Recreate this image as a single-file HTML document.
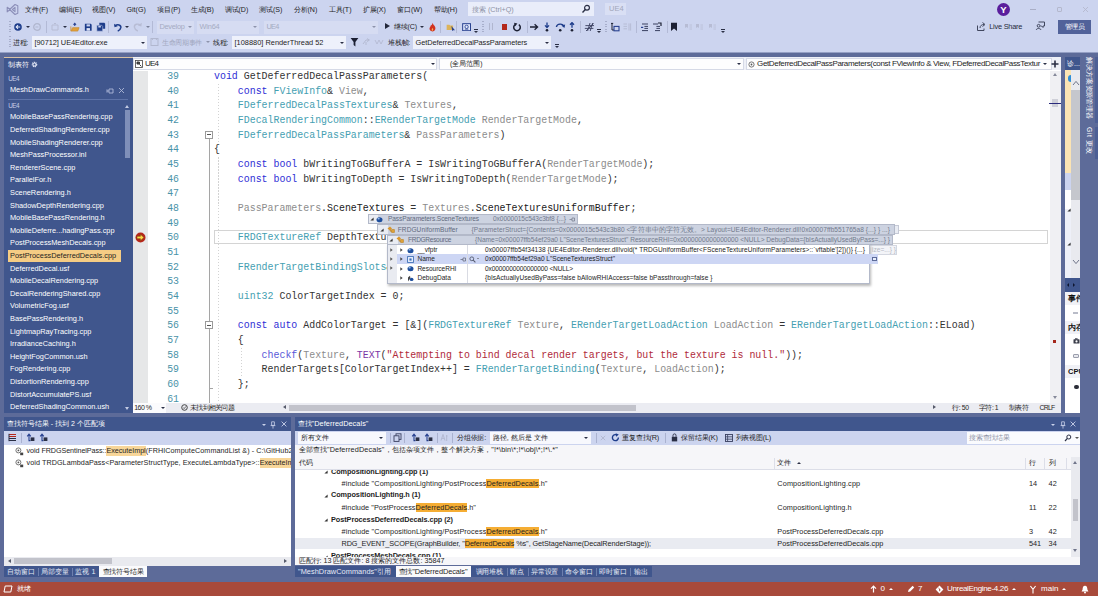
<!DOCTYPE html>
<html lang="zh">
<head>
<meta charset="utf-8">
<title>UE4 - Microsoft Visual Studio</title>
<style>
*{box-sizing:border-box;margin:0;padding:0}
html,body{width:1098px;height:596px;overflow:hidden}
body{position:relative;background:#5d6b99;font-family:"Liberation Sans",sans-serif;font-size:8px;color:#1e1e1e}
.a{position:absolute;white-space:nowrap}
.t{position:absolute;white-space:nowrap;line-height:10px;height:10px}
/* top */
#top{left:0;top:0;width:1098px;height:53.5px;background:linear-gradient(#ccd4ef 0,#ccd4ef 51.5px,#5d6b99 53.5px)}
.menu{top:4.5px;font-size:7.1px;color:#1e1e1e}
.gray{color:#8f96ab}
/* side panel */
#side{left:4px;top:58px;width:128.5px;height:355px;background:#40568d;overflow:hidden}
#side .it{position:absolute;left:6px;font-size:7.35px;color:#fff;line-height:10px;white-space:nowrap}
/* editor */
#ed{left:133px;top:57px;width:927.5px;height:356px;background:#fff;overflow:hidden}
.ln{position:absolute;left:26px;width:20px;text-align:right;font-family:"Liberation Mono",monospace;font-size:11.6px;line-height:14px;color:#4a93a8;transform:scaleX(.85);transform-origin:right center}
.cl{position:absolute;left:81px;font-family:"Liberation Mono",monospace;font-size:11.6px;line-height:14px;height:14px;white-space:pre;color:#333;transform:scaleX(.855);transform-origin:left center}
.k{color:#2f2fd6}.ty{color:#45a0b2}.p{color:#8c8c8c}.s{color:#b02a3a}.m{color:#5858d8}.m2{color:#7a35a5}.b{color:#1a1a1a}
</style>
</head>
<body>
<div id="top" class="a">
<svg class="a" style="left:6px;top:3px" width="13" height="13" viewBox="0 0 13 13"><path d="M1.2 4.2 L4.2 6.5 L1.2 8.8 Z M9 1.5 L11.8 2.8 L11.8 10.2 L9 11.5 L3.6 6.5 Z M9 4.3 L6.4 6.5 L9 8.7 Z" fill="none" stroke="#8c8fb9" stroke-width="1.1" stroke-linejoin="round"/></svg>
<div class="t menu" style="left:25px">文件(F)</div>
<div class="t menu" style="left:58.5px">编辑(E)</div>
<div class="t menu" style="left:92px">视图(V)</div>
<div class="t menu" style="left:126.5px">Git(G)</div>
<div class="t menu" style="left:157px">项目(P)</div>
<div class="t menu" style="left:190.5px">生成(B)</div>
<div class="t menu" style="left:224.5px">调试(D)</div>
<div class="t menu" style="left:259px">测试(S)</div>
<div class="t menu" style="left:293.5px">分析(N)</div>
<div class="t menu" style="left:328.5px">工具(T)</div>
<div class="t menu" style="left:362.5px">扩展(X)</div>
<div class="t menu" style="left:397px">窗口(W)</div>
<div class="t menu" style="left:433.5px">帮助(H)</div>
<div class="a" style="left:468px;top:2px;width:126px;height:14px;background:#e9edfa"></div>
<div class="t" style="letter-spacing:-0.005px;left:472px;top:4.5px;color:#8e93a6;font-size:7.2px">搜索 (Ctrl+Q)</div>
<svg class="a" style="left:581px;top:4px" width="10" height="10" viewBox="0 0 10 10"><circle cx="6" cy="3.8" r="2.4" fill="none" stroke="#2a2f45" stroke-width="1.2"/><path d="M4.3 5.6 L1.5 8.6" stroke="#2a2f45" stroke-width="1.4"/></svg>
<div class="a" style="left:605px;top:3px;width:21px;height:12px;background:#d9dff4"></div>
<div class="t" style="left:609px;top:4px;color:#a2a7bb;font-size:7.5px">UE4</div>
<div class="a" style="left:997px;top:3px;width:13px;height:13px;border-radius:50%;background:#5a1e9c"></div>
<div class="t" style="left:1000.2px;top:4.5px;color:#fff;font-size:9.5px;font-weight:bold">Y</div>
<div class="a" style="left:1030px;top:9px;width:6px;height:1px;background:#a9aec6"></div>
<div class="a" style="left:1057px;top:7px;width:5px;height:5px;border:1px solid #b4b8cd;border-radius:1px"></div>
<svg class="a" style="left:1082px;top:6px" width="7" height="7" viewBox="0 0 7 7"><path d="M1 1 L6 6 M6 1 L1 6" stroke="#b4b8cd" stroke-width="0.9"/></svg>
<svg class="a" style="left:976px;top:21px" width="11" height="11" viewBox="0 0 11 11"><path d="M1.5 4.5 L1.5 9.5 L8 9.5 L8 7.5 M4 7 C4 4.5 6 3.5 8 3.5 M6.5 1.5 L9 3.5 L6.5 5.5" fill="none" stroke="#41475f" stroke-width="1"/></svg>
<div class="t" style="letter-spacing:-0.234px;left:989.2px;top:22px;font-size:7.4px;color:#262b40">Live Share</div>
<svg class="a" style="left:1035px;top:20px" width="11" height="11" viewBox="0 0 11 11"><path d="M3.5 2 L9.5 2 L9.5 6 L8 6 L8 7.5 L6.5 6 L5.5 6" fill="none" stroke="#41475f" stroke-width="1"/><circle cx="3.6" cy="5.8" r="1.4" fill="none" stroke="#41475f" stroke-width="1"/><path d="M1.2 10 C1.5 8 5.5 8 6 10" fill="none" stroke="#41475f" stroke-width="1"/></svg>
<div class="a" style="left:1058px;top:20px;width:33px;height:14px;background:#51629a"></div>
<div class="t" style="letter-spacing:-0.600px;left:1065px;top:22px;font-size:6.6px;color:#fff">管理员</div>
<div class="a" style="left:9px;top:20.5px;width:2px;height:12px;background:repeating-linear-gradient(#a7aecb 0 1px,transparent 1px 2.5px)"></div>
<svg class="a" style="left:13.3px;top:22.1px" width="10" height="10" viewBox="0 0 10 10"><circle cx="5" cy="5" r="3.8" fill="#1d3c8a"/><path d="M7.2 5 L3.4 5 M5 3.2 L3.2 5 L5 6.8" stroke="#e4e9fa" stroke-width="1.1" fill="none"/></svg>
<div class="a" style="left:26px;top:25.5px;width:0;height:0;border-left:2px solid transparent;border-right:2px solid transparent;border-top:2.2px solid #2a2f45"></div>
<svg class="a" style="left:32px;top:21.5px" width="10" height="10" viewBox="0 0 10 10"><circle cx="5" cy="5" r="3.3" fill="none" stroke="#b1b7cf" stroke-width="1.3"/><path d="M3.4 5 L6.4 5" stroke="#b1b7cf" stroke-width="1"/></svg>
<div class="a" style="left:46px;top:20.5px;width:1px;height:12px;background:#b3bad6"></div>
<svg class="a" style="left:50px;top:21.5px" width="10" height="10" viewBox="0 0 10 10"><path d="M2 3 L8 3 L8 8 L2 8 Z M4 1.5 L6 1.5" fill="none" stroke="#b7bcd4" stroke-width="1"/></svg>
<div class="a" style="left:63px;top:25.5px;width:0;height:0;border-left:2px solid transparent;border-right:2px solid transparent;border-top:2.2px solid #2a2f45"></div>
<svg class="a" style="left:70px;top:22px" width="9.5" height="10.4" viewBox="0 0 11 12"><path d="M1 5 L1 10.5 L9 10.5 L10.5 6.5 L3 6.5 L1.8 10" fill="#e0a03c" stroke="#c98a2c" stroke-width=".8"/><path d="M5.5 4.5 L5.5 2 M4 3.2 L5.5 1.5 L7 3.2" stroke="#27408f" stroke-width="1.2" fill="none"/></svg>
<svg class="a" style="left:83.5px;top:22.7px" width="8.5" height="8.5" viewBox="0 0 10 10"><path d="M1 1 L8 1 L9 2 L9 9 L1 9 Z" fill="#1d3c8a"/><rect x="3" y="1.6" width="4" height="2.4" fill="#ccd4ef"/><rect x="3" y="6" width="4" height="3" fill="#dfe4f6"/></svg>
<svg class="a" style="left:95.5px;top:22px" width="10" height="10" viewBox="0 0 12 12"><path d="M4 1 L10 1 L11 2 L11 8 L4 8 Z" fill="#1d3c8a"/><path d="M1 4 L7 4 L8 5 L8 11 L1 11 Z" fill="#1d3c8a" stroke="#ccd4ef" stroke-width=".6"/><rect x="2.8" y="4.6" width="3" height="2" fill="#ccd4ef"/></svg>
<div class="a" style="left:108px;top:20.5px;width:1px;height:12px;background:#b3bad6"></div>
<svg class="a" style="left:112.5px;top:21.5px" width="10" height="11" viewBox="0 0 11 12"><path d="M2.2 4.2 C5 2.2 9 3 8.6 6.2 C8.3 8 7 9.3 5.2 10" fill="none" stroke="#1d3c8a" stroke-width="1.7"/><path d="M1.2 1.8 L1.6 5.6 L5.2 4.6 Z" fill="#1d3c8a"/></svg>
<div class="a" style="left:125px;top:25.5px;width:0;height:0;border-left:2px solid transparent;border-right:2px solid transparent;border-top:2.2px solid #2a2f45"></div>
<svg class="a" style="left:132px;top:20.5px" width="11" height="12" viewBox="0 0 11 12"><path d="M8.8 4.2 C6 2.2 2 3 2.4 6.2 C2.7 8 4 9.3 5.8 10" fill="none" stroke="#b7bcd4" stroke-width="1.4"/><path d="M9.8 1.8 L9.4 5.6 L5.8 4.6 Z" fill="#b7bcd4"/></svg>
<div class="a" style="left:146px;top:25.5px;width:0;height:0;border-left:2px solid transparent;border-right:2px solid transparent;border-top:2.2px solid #7b819a"></div>
<div class="a" style="left:152px;top:20.5px;width:1px;height:12px;background:#b3bad6"></div>
<div class="a" style="left:157px;top:20.5px;width:37px;height:13px;background:#d6dcf2"></div><div class="t" style="letter-spacing:-0.304px;left:159.5px;top:22px;color:#a5abc2;font-size:7.4px">Develop</div><div class="a" style="left:187.5px;top:26px;width:0;height:0;border-left:2px solid transparent;border-right:2px solid transparent;border-top:2.2px solid #8d93ab"></div>
<div class="a" style="left:197px;top:20.5px;width:62px;height:13px;background:#d6dcf2"></div><div class="t" style="letter-spacing:-0.191px;left:199.5px;top:22px;color:#a5abc2;font-size:7.4px">Win64</div><div class="a" style="left:252.5px;top:26px;width:0;height:0;border-left:2px solid transparent;border-right:2px solid transparent;border-top:2.2px solid #8d93ab"></div>
<div class="a" style="left:264px;top:20.5px;width:114px;height:13px;background:#d6dcf2"></div><div class="t" style="letter-spacing:-0.797px;left:266.5px;top:22px;color:#a5abc2;font-size:7.4px">UE4</div><div class="a" style="left:371.5px;top:26px;width:0;height:0;border-left:2px solid transparent;border-right:2px solid transparent;border-top:2.2px solid #8d93ab"></div>
<div class="a" style="left:385px;top:22.9px;width:0;height:0;border-top:3.6px solid transparent;border-bottom:3.6px solid transparent;border-left:5px solid #22273a"></div>
<div class="t" style="letter-spacing:-0.112px;left:393.7px;top:22px;color:#1e1e1e;font-size:7.1px">继续(C)</div>
<div class="a" style="left:420px;top:25.5px;width:0;height:0;border-left:2px solid transparent;border-right:2px solid transparent;border-top:2.2px solid #2a2f45"></div>
<svg class="a" style="left:428px;top:21.5px" width="9" height="10" viewBox="0 0 9 10"><path d="M4.5 .8 C5 3 7.8 4 7.4 6.8 C7.1 8.6 5.8 9.4 4.4 9.4 C2.6 9.4 1.4 8.2 1.5 6.6 C1.6 5 2.8 4.6 2.8 3.2 C3.8 3.6 4.2 2.4 4.5 .8 Z" fill="#d2341f"/><path d="M4.5 6 C5.4 7 5.4 8.6 4.4 8.8 C3.4 8.6 3.6 7 4.5 6Z" fill="#f7b25a"/></svg>
<div class="a" style="left:440px;top:20.5px;width:1px;height:12px;background:#b3bad6"></div>
<svg class="a" style="left:445.5px;top:22.5px" width="10" height="8.4" viewBox="0 0 12 10"><path d="M.8 2 L4 2 L5 3 L8.5 3 L8.5 8.4 L.8 8.4 Z" fill="#dcb35a"/><path d="M6.4 3.6 L10.8 8.8 L8.6 8.6 L7.6 9.8 Z" fill="#27408f"/></svg>
<div class="a" style="left:456px;top:20.5px;width:1px;height:12px;background:#b3bad6"></div>
<svg class="a" style="left:462.3px;top:22.5px" width="9.2" height="8.4" viewBox="0 0 11 10"><rect x=".8" y=".8" width="9.4" height="8.4" fill="#dfe6fb" stroke="#27408f" stroke-width="1.2"/><circle cx="5.5" cy="4.6" r="2" fill="none" stroke="#27408f" stroke-width="1"/><path d="M3.4 7.4 L7.6 7.4" stroke="#27408f" stroke-width=".9"/></svg>
<div class="a" style="left:474px;top:28.5px;width:4px;height:1px;background:#2a2f45"></div><div class="a" style="left:474px;top:30.5px;width:0;height:0;border-left:2px solid transparent;border-right:2px solid transparent;border-top:2.2px solid #2a2f45"></div>
<div class="a" style="left:482px;top:20.5px;width:2px;height:12px;background:repeating-linear-gradient(#a7aecb 0 1px,transparent 1px 2.5px)"></div>
<div class="a" style="left:489px;top:23px;width:1.2px;height:7px;background:#b0b6cf"></div><div class="a" style="left:492px;top:23px;width:1.2px;height:7px;background:#b0b6cf"></div>
<div class="a" style="left:501.5px;top:24px;width:5.5px;height:5.5px;background:#b3271a"></div>
<svg class="a" style="left:512px;top:21.5px" width="10" height="10" viewBox="0 0 10 10"><path d="M3.2 2.6 A3.3 3.3 0 1 0 6.8 2.6" fill="none" stroke="#1c2033" stroke-width="1.5"/><path d="M2 .8 L5.4 1.4 L3.2 4.2 Z" fill="#1c2033"/></svg>
<div class="a" style="left:527px;top:20.5px;width:1px;height:12px;background:#b3bad6"></div>
<svg class="a" style="left:529px;top:21.5px" width="10" height="10" viewBox="0 0 10 10"><path d="M1 5 L8.4 5 M5.6 2.2 L8.6 5 L5.6 7.8" fill="none" stroke="#1c2033" stroke-width="1.3"/></svg>
<svg class="a" style="left:543px;top:21.5px" width="8" height="10" viewBox="0 0 8 10"><path d="M4 .6 L4 5.2 M2 3.4 L4 5.6 L6 3.4" fill="none" stroke="#1d3c8a" stroke-width="1.3"/><circle cx="4" cy="8.2" r="1.3" fill="#1c2033"/></svg>
<svg class="a" style="left:555.3px;top:21.5px" width="11" height="10" viewBox="0 0 11 10"><path d="M1.4 5 C2 1.4 8 1.2 8.8 4.6" fill="none" stroke="#1d3c8a" stroke-width="1.4"/><path d="M6.4 3.6 L9.4 6 L10.2 2.4 Z" fill="#1d3c8a"/><circle cx="5.2" cy="8.2" r="1.3" fill="#1c2033"/></svg>
<svg class="a" style="left:568px;top:21.5px" width="8" height="10" viewBox="0 0 8 10"><path d="M4 5.8 L4 1 M2 2.8 L4 .6 L6 2.8" fill="none" stroke="#1d3c8a" stroke-width="1.3"/><circle cx="4" cy="8.2" r="1.3" fill="#1c2033"/></svg>
<div class="a" style="left:580px;top:20.5px;width:1px;height:12px;background:#b3bad6"></div>
<svg class="a" style="left:584px;top:21.5px" width="11" height="10" viewBox="0 0 11 10"><path d="M3.6 9 L6 1 M6.2 9 L8.6 1 M1.4 3.6 L10 3.6 M.8 6.4 L9.4 6.4 M2 9 L9.6 1.4" stroke="#3a4060" stroke-width=".9" fill="none"/></svg>
<div class="a" style="left:597px;top:28.5px;width:4px;height:1px;background:#2a2f45"></div><div class="a" style="left:597px;top:30.5px;width:0;height:0;border-left:2px solid transparent;border-right:2px solid transparent;border-top:2.2px solid #2a2f45"></div>
<div class="a" style="left:605px;top:20.5px;width:2px;height:12px;background:repeating-linear-gradient(#a7aecb 0 1px,transparent 1px 2.5px)"></div>
<svg class="a" style="left:610px;top:21.5px" width="10" height="10" viewBox="0 0 10 10"><path d="M1 1.4 L3.2 1.4 M2 1.4 L2 8 L4 8" stroke="#1c2033" stroke-width="1" fill="none"/><rect x="4" y="4.4" width="5" height="4.4" fill="none" stroke="#27408f" stroke-width="1.1"/></svg>
<svg class="a" style="left:622px;top:21.5px" width="10" height="10" viewBox="0 0 10 10"><path d="M1.5 2 L5 2 M1.5 4.4 L5 4.4 M1.5 6.8 L5 6.8 M7 1.4 L7 8.6 M8.6 1.4 L8.6 8.6" stroke="#b4bad2" stroke-width=".9"/></svg>
<div class="a" style="left:636px;top:20.5px;width:1px;height:12px;background:#b3bad6"></div>
<svg class="a" style="left:640px;top:21.5px" width="10" height="10" viewBox="0 0 10 10"><path d="M2 2 L8 2 M4.4 4.4 L8 4.4 M4.4 6.4 L8 6.4 M2 8.6 L8 8.6" stroke="#3a4060" stroke-width="1"/><path d="M1 5.4 L3.2 5.4" stroke="#27408f" stroke-width="1.2"/></svg>
<svg class="a" style="left:652px;top:21.5px" width="10" height="10" viewBox="0 0 10 10"><path d="M1 2 L6 2 M4.4 4.4 L8 4.4 M4.4 6.4 L8 6.4 M3 8.6 L8 8.6" stroke="#3a4060" stroke-width="1"/><path d="M6 1 L9 1 L9 4" stroke="#1c2033" stroke-width="1.2" fill="none"/></svg>
<div class="a" style="left:667px;top:20.5px;width:1px;height:12px;background:#b3bad6"></div>
<svg class="a" style="left:670px;top:21.5px" width="8" height="10" viewBox="0 0 8 10"><path d="M1 .8 L7 .8 L7 9 L4 6.6 L1 9 Z" fill="#1c2033"/></svg>
<svg class="a" style="left:684px;top:22.5px" width="9" height="8" viewBox="0 0 9 8"><path d="M1 1 L4 1 L4 5 L2.5 4 L1 5 Z" fill="#b7bcd4"/><path d="M5.4 2 L8 2 M5.4 4 L8 4 M5.4 6 L8 6" stroke="#b7bcd4" stroke-width=".8"/></svg>
<svg class="a" style="left:695px;top:22.5px" width="9" height="8" viewBox="0 0 9 8"><path d="M1 1 L4 1 L4 5 L2.5 4 L1 5 Z" fill="#b7bcd4"/><path d="M5.4 2 L8 2 M5.4 4 L8 4 M5.4 6 L8 6" stroke="#b7bcd4" stroke-width=".8"/></svg>
<svg class="a" style="left:708px;top:22.5px" width="9" height="8" viewBox="0 0 9 8"><path d="M1 1 L4 1 L4 5 L2.5 4 L1 5 Z" fill="#b7bcd4"/><path d="M5.4 2 L8 2 M5.4 4 L8 4 M5.4 6 L8 6" stroke="#b7bcd4" stroke-width=".8"/></svg>
<div class="a" style="left:720.5px;top:28.5px;width:4px;height:1px;background:#2a2f45"></div><div class="a" style="left:720.5px;top:30.5px;width:0;height:0;border-left:2px solid transparent;border-right:2px solid transparent;border-top:2.2px solid #2a2f45"></div>
<div class="a" style="left:9px;top:36px;width:2px;height:12px;background:repeating-linear-gradient(#a7aecb 0 1px,transparent 1px 2.5px)"></div>
<div class="t" style="letter-spacing:-0.318px;left:13px;top:37.5px;font-size:7px">进程:</div>
<div class="a" style="left:32px;top:36px;width:115px;height:13px;background:#eef1fb"></div><div class="t" style="letter-spacing:-0.046px;left:34.5px;top:37.5px;color:#1e1e1e;font-size:7.4px">[90712] UE4Editor.exe</div><div class="a" style="left:140.5px;top:41.5px;width:0;height:0;border-left:2px solid transparent;border-right:2px solid transparent;border-top:2.2px solid #2a2f45"></div>
<svg class="a" style="left:150px;top:37px" width="9" height="10" viewBox="0 0 9 10"><rect x="1" y="1.5" width="7" height="7" fill="none" stroke="#b1b7cf" stroke-width="1"/><path d="M2.4 1 L2.4 3 M6.4 1 L6.4 3" stroke="#b1b7cf"/></svg>
<div class="t" style="letter-spacing:-0.333px;left:162px;top:37.5px;color:#a1a7be;font-size:6.9px">生命周期事件</div>
<div class="a" style="left:206px;top:41px;width:0;height:0;border-left:2px solid transparent;border-right:2px solid transparent;border-top:2.2px solid #8d93ab"></div>
<div class="t" style="letter-spacing:-0.318px;left:213px;top:37.5px;font-size:7px">线程:</div>
<div class="a" style="left:232px;top:36px;width:114px;height:13px;background:#eef1fb"></div><div class="t" style="letter-spacing:0.010px;left:234.5px;top:37.5px;color:#1e1e1e;font-size:7.4px">[108880] RenderThread 52</div><div class="a" style="left:339.5px;top:41.5px;width:0;height:0;border-left:2px solid transparent;border-right:2px solid transparent;border-top:2.2px solid #2a2f45"></div>
<svg class="a" style="left:350px;top:37px" width="9" height="10" viewBox="0 0 9 10"><path d="M.6 1 L8.4 1 L5.4 5 L5.4 9.4 L3.6 8 L3.6 5 Z" fill="#1c2033"/></svg>
<svg class="a" style="left:362px;top:38px" width="9" height="8" viewBox="0 0 9 8"><path d="M1 6 L4 2 L7 2 M5 .6 L7.4 2 L5 3.6 M4 7 L4 4" stroke="#b4bad2" stroke-width="1" fill="none"/></svg>
<svg class="a" style="left:374px;top:38px" width="10" height="8" viewBox="0 0 10 8"><path d="M1 2 L3 6 L5 2 L7 6 L9 2" stroke="#b4bad2" stroke-width=".9" fill="none"/></svg>
<div class="t" style="letter-spacing:-0.238px;left:388px;top:37.5px;font-size:7px">堆栈帧:</div>
<div class="a" style="left:413px;top:36px;width:138px;height:13px;background:#eef1fb"></div><div class="t" style="letter-spacing:-0.083px;left:415.5px;top:37.5px;color:#1e1e1e;font-size:7.4px">GetDeferredDecalPassParameters</div><div class="a" style="left:544.5px;top:41.5px;width:0;height:0;border-left:2px solid transparent;border-right:2px solid transparent;border-top:2.2px solid #2a2f45"></div>
<div class="a" style="left:555px;top:44px;width:4px;height:1px;background:#2a2f45"></div><div class="a" style="left:555px;top:46px;width:0;height:0;border-left:2px solid transparent;border-right:2px solid transparent;border-top:2.2px solid #2a2f45"></div>
</div>
<div id="side" class="a"><div class="a" style="left:0;top:-1px">
<div class="t" style="letter-spacing:-0.333px;left:4.3px;top:2.7px;color:#fff;font-size:6.7px">制表符</div>
<svg class="a" style="left:27.2px;top:3.7px" width="7" height="7" viewBox="0 0 7 7"><circle cx="3.5" cy="3.5" r="2" fill="none" stroke="#dfe4f4" stroke-width="1.6" stroke-dasharray="1.05 .52"/><circle cx="3.5" cy="3.5" r="1.4" fill="none" stroke="#dfe4f4" stroke-width=".9"/></svg>
<div class="t" style="letter-spacing:-0.546px;left:4.3px;top:16.8px;color:#c5cde6;font-size:6.4px">UE4</div>
<div class="it" style="top:28px">MeshDrawCommands.h</div>
<svg class="a" style="left:102px;top:30px" width="8" height="7" viewBox="0 0 8 7"><path d="M1 5.6 L1 2.4 M1 4 L3 4 M3 2 L3 6 L7 6 L7 2 Z" fill="none" stroke="#aeb8d8" stroke-width=".9"/></svg>
<svg class="a" style="left:114px;top:30px" width="7" height="7" viewBox="0 0 7 7"><path d="M1 1 L6 6 M6 1 L1 6" stroke="#aeb8d8" stroke-width=".9"/></svg>
<div class="a" style="left:4px;top:41.5px;width:120px;height:1px;background:#5e73a8"></div>
<div class="t" style="letter-spacing:-0.546px;left:4.3px;top:44.3px;color:#c5cde6;font-size:6.4px">UE4</div>
<div class="it" style="top:55.2px">MobileBasePassRendering.cpp</div>
<div class="it" style="top:67.9px">DeferredShadingRenderer.cpp</div>
<div class="it" style="top:80.5px">MobileShadingRenderer.cpp</div>
<div class="it" style="top:93.1px">MeshPassProcessor.inl</div>
<div class="it" style="top:105.7px">RendererScene.cpp</div>
<div class="it" style="top:118.3px">ParallelFor.h</div>
<div class="it" style="top:130.9px">SceneRendering.h</div>
<div class="it" style="top:143.5px">ShadowDepthRendering.cpp</div>
<div class="it" style="top:156.1px">MobileBasePassRendering.h</div>
<div class="it" style="top:168.7px">MobileDeferre...hadingPass.cpp</div>
<div class="it" style="top:181.3px">PostProcessMeshDecals.cpp</div>
<div class="a" style="left:4px;top:192.7px;width:113px;height:12.3px;background:#f5cc84"></div>
<div class="it" style="top:194.0px;color:#1e1e1e">PostProcessDeferredDecals.cpp</div>
<div class="it" style="top:206.6px">DeferredDecal.usf</div>
<div class="it" style="top:219.2px">MobileDecalRendering.cpp</div>
<div class="it" style="top:231.8px">DecalRenderingShared.cpp</div>
<div class="it" style="top:244.4px">VolumetricFog.usf</div>
<div class="it" style="top:257.0px">BasePassRendering.h</div>
<div class="it" style="top:269.6px">LightmapRayTracing.cpp</div>
<div class="it" style="top:282.2px">IrradianceCaching.h</div>
<div class="it" style="top:294.8px">HeightFogCommon.ush</div>
<div class="it" style="top:307.4px">FogRendering.cpp</div>
<div class="it" style="top:320.1px">DistortionRendering.cpp</div>
<div class="it" style="top:332.7px">DistortAccumulatePS.usf</div>
<div class="it" style="top:345.3px">DeferredShadingCommon.ush</div>
<div class="a" style="left:121px;top:53.4px;width:5px;height:48px;background:#7f8fb9"></div>
<div class="a" style="left:121px;top:47.5px;width:0;height:0;border-left:2.5px solid transparent;border-right:2.5px solid transparent;border-bottom:3px solid #c3cbe4"></div>
<div class="a" style="left:121px;top:349.5px;width:0;height:0;border-left:2.5px solid transparent;border-right:2.5px solid transparent;border-top:3px solid #c3cbe4"></div>
</div></div>
<div class="a" style="left:4px;top:56.6px;width:1057px;height:1px;background:#d9c3a5"></div>
<div id="ed" class="a">
<div class="a" style="left:0;top:0;width:930px;height:.4px;background:#5d6b99"></div><div class="a" style="left:0;top:.4px;width:930px;height:13.1px;background:#eef0f7"></div>
<div class="a" style="left:0;top:1px;width:304px;height:12px;background:#fdfdfe;border:1px solid #d5d9e6"></div>
<div class="a" style="left:306px;top:1px;width:305px;height:12px;background:#fdfdfe;border:1px solid #d5d9e6"></div>
<div class="a" style="left:613px;top:1px;width:306px;height:12px;background:#fdfdfe;border:1px solid #d5d9e6"></div>
<svg class="a" style="left:2px;top:3px" width="8" height="8" viewBox="0 0 8 8"><rect x=".5" y=".5" width="7" height="7" fill="#fff" stroke="#444" stroke-width=".8"/><path d="M2 2 L4.4 2 L4.4 4 L2 4 Z M4.4 4.4 L6.4 6.4" stroke="#222" stroke-width=".9" fill="#666"/></svg>
<div class="t" style="letter-spacing:-0.854px;left:12px;top:2px;font-size:8px;color:#1e1e1e">UE4</div>
<div class="a" style="left:298px;top:6px;width:0;height:0;border-left:2px solid transparent;border-right:2px solid transparent;border-top:2.2px solid #2a2f45"></div>
<div class="t" style="left:317px;top:2px;font-size:6.8px;color:#1e1e1e">(全局范围)</div>
<div class="a" style="left:604px;top:6px;width:0;height:0;border-left:2px solid transparent;border-right:2px solid transparent;border-top:2.2px solid #2a2f45"></div>
<svg class="a" style="left:614.5px;top:3.5px" width="7" height="7" viewBox="0 0 7 7"><circle cx="3.5" cy="3.5" r="2.6" fill="none" stroke="#555" stroke-width=".8"/><circle cx="3.5" cy="3.5" r=".9" fill="#555"/></svg>
<div class="t" style="letter-spacing:-0.343px;left:624px;top:2px;font-size:8px;color:#1e1e1e">GetDeferredDecalPassParameters(const FViewInfo &amp; View, FDeferredDecalPassTextur</div>
<div class="a" style="left:910px;top:6px;width:0;height:0;border-left:2px solid transparent;border-right:2px solid transparent;border-top:2.2px solid #2a2f45"></div>
<svg class="a" style="left:918px;top:3px" width="8" height="8" viewBox="0 0 8 8"><path d="M4 .5 L4 7.5 M.5 4 L7.5 4" stroke="#2a2f45" stroke-width="1.6"/></svg>
<div class="a" style="left:0;top:13.5px;width:14.5px;height:332px;background:#e6e7e8"></div>
<div class="a" style="left:80.5px;top:173.0px;width:834.5px;height:14.3px;border:1px solid #d4d4d4"></div>
<div class="a" style="left:75.5px;top:80.7px;width:1px;height:266.0px;background:#a5a5a5"></div>
<div class="a" style="left:72px;top:73.7px;width:8px;height:8px;background:#fff;border:1px solid #9a9a9a"></div><div class="a" style="left:74px;top:77.2px;width:4px;height:1px;background:#555"></div>
<div class="a" style="left:72px;top:264.3px;width:8px;height:8px;background:#fff;border:1px solid #9a9a9a"></div><div class="a" style="left:74px;top:267.8px;width:4px;height:1px;background:#555"></div>
<div class="a" style="left:75.5px;top:331.0px;width:4px;height:1px;background:#a5a5a5"></div>
<div class="a" style="left:84.5px;top:26.7px;width:1px;height:58.7px;background:repeating-linear-gradient(#c8c8c8 0 1.5px,transparent 1.5px 3px);opacity:.8"></div>
<div class="a" style="left:84.5px;top:100.0px;width:1px;height:249.3px;background:repeating-linear-gradient(#c8c8c8 0 1.5px,transparent 1.5px 3px);opacity:.8"></div>
<div class="a" style="left:108.3px;top:290.6px;width:1px;height:29.3px;background:repeating-linear-gradient(#c8c8c8 0 1.5px,transparent 1.5px 3px);opacity:.8"></div>
<div class="ln" style="top:12.0px">39</div>
<div class="cl" style="top:12.0px"><span class="k">void</span> GetDeferredDecalPassParameters(</div>
<div class="ln" style="top:26.7px">40</div>
<div class="cl" style="top:26.7px">    <span class="k">const</span> <span class="ty">FViewInfo</span>&amp; <span class="p">View</span>,</div>
<div class="ln" style="top:41.3px">41</div>
<div class="cl" style="top:41.3px">    <span class="ty">FDeferredDecalPassTextures</span>&amp; <span class="p">Textures</span>,</div>
<div class="ln" style="top:56.0px">42</div>
<div class="cl" style="top:56.0px">    <span class="ty">FDecalRenderingCommon</span>::<span class="ty">ERenderTargetMode</span> <span class="p">RenderTargetMode</span>,</div>
<div class="ln" style="top:70.7px">43</div>
<div class="cl" style="top:70.7px">    <span class="ty">FDeferredDecalPassParameters</span>&amp; <span class="p">PassParameters</span>)</div>
<div class="ln" style="top:85.3px">44</div>
<div class="cl" style="top:85.3px">{</div>
<div class="ln" style="top:100.0px">45</div>
<div class="cl" style="top:100.0px">    <span class="k">const</span> <span class="k">bool</span> bWritingToGBufferA = IsWritingToGBufferA(<span class="p">RenderTargetMode</span>);</div>
<div class="ln" style="top:114.7px">46</div>
<div class="cl" style="top:114.7px">    <span class="k">const</span> <span class="k">bool</span> bWritingToDepth = IsWritingToDepth(<span class="p">RenderTargetMode</span>);</div>
<div class="ln" style="top:129.3px">47</div>
<div class="ln" style="top:144.0px">48</div>
<div class="cl" style="top:144.0px">    <span class="p">PassParameters</span>.<span class="b">SceneTextures</span> = <span class="p">Textures</span>.<span class="b">SceneTexturesUniformBuffer</span>;</div>
<div class="ln" style="top:158.6px">49</div>
<div class="ln" style="top:173.3px">50</div>
<div class="cl" style="top:173.3px">    <span class="ty">FRDGTextureRef</span> DepthTexture = <span class="p">Textures</span>.Depth.Target;</div>
<div class="ln" style="top:188.0px">51</div>
<div class="ln" style="top:202.6px">52</div>
<div class="cl" style="top:202.6px">    <span class="ty">FRenderTargetBindingSlots</span>&amp; RenderTargets = <span class="p">PassParameters</span>.RenderTargets;</div>
<div class="ln" style="top:217.3px">53</div>
<div class="ln" style="top:232.0px">54</div>
<div class="cl" style="top:232.0px">    <span class="ty">uint32</span> ColorTargetIndex = 0;</div>
<div class="ln" style="top:246.6px">55</div>
<div class="ln" style="top:261.3px">56</div>
<div class="cl" style="top:261.3px">    <span class="k">const</span> <span class="k">auto</span> AddColorTarget = [&amp;](<span class="ty">FRDGTextureRef</span> <span class="p">Texture</span>, <span class="ty">ERenderTargetLoadAction</span> <span class="p">LoadAction</span> = <span class="ty">ERenderTargetLoadAction</span>::ELoad)</div>
<div class="ln" style="top:276.0px">57</div>
<div class="cl" style="top:276.0px">    {</div>
<div class="ln" style="top:290.6px">58</div>
<div class="cl" style="top:290.6px">        <span class="m">checkf</span>(<span class="p">Texture</span>, <span class="m2">TEXT</span>(<span class="s">"Attempting to bind decal render targets, but the texture is null."</span>));</div>
<div class="ln" style="top:305.3px">59</div>
<div class="cl" style="top:305.3px">        RenderTargets[ColorTargetIndex++] = <span class="ty">FRenderTargetBinding</span>(<span class="p">Texture</span>, <span class="p">LoadAction</span>);</div>
<div class="ln" style="top:320.0px">60</div>
<div class="cl" style="top:320.0px">    };</div>
<div class="ln" style="top:334.6px">61</div>
<svg class="a" style="left:1.5px;top:174.8px" width="11" height="11" viewBox="0 0 11 11"><circle cx="5.5" cy="5.5" r="5" fill="#b5271b"/><path d="M2 4.3 L5.4 4.3 L5.4 2.3 L9 5.5 L5.4 8.7 L5.4 6.7 L2 6.7 Z" fill="#ffd94a" stroke="#6b3b00" stroke-width=".5"/></svg>
<div class="a" style="left:916.5px;top:13.5px;width:11px;height:332px;background:#f0f0f3"></div>
<div class="a" style="left:919.5px;top:16px;width:0;height:0;border-left:2.5px solid transparent;border-right:2.5px solid transparent;border-bottom:3px solid #868999"></div>
<div class="a" style="left:919.5px;top:339.3px;width:0;height:0;border-left:2.5px solid transparent;border-right:2.5px solid transparent;border-top:3px solid #868999"></div>
<div class="a" style="left:918.7px;top:42px;width:6.3px;height:8px;background:#cfd0d8"></div>
<div class="a" style="left:916px;top:45.7px;width:11.5px;height:1.6px;background:#2a2b7c"></div>
<div class="a" style="left:920px;top:283px;width:2.5px;height:2.5px;background:#a5271b"></div>
<div class="a" style="left:0;top:345.5px;width:930px;height:10.5px;background:#ebecf2"></div>
<div class="a" style="left:0;top:346px;width:33px;height:10px;background:#fbfbfd"></div>
<div class="t" style="letter-spacing:-0.572px;left:1.3px;top:345.8px;font-size:7px;color:#1e1e1e">160 %</div>
<div class="a" style="left:28.4px;top:350px;width:0;height:0;border-left:2px solid transparent;border-right:2px solid transparent;border-top:2.2px solid #2a2f45"></div>
<svg class="a" style="left:47.5px;top:347.3px" width="7" height="7" viewBox="0 0 7 7"><circle cx="3.5" cy="3.5" r="2.8" fill="none" stroke="#444" stroke-width="1"/><path d="M2.2 3.5 L3.2 4.6 L5 2.4" stroke="#444" stroke-width=".8" fill="none"/></svg>
<div class="t" style="letter-spacing:-0.729px;left:57px;top:345.8px;font-size:6.9px;color:#1e1e1e">未找到相关问题</div>
<div class="a" style="left:150px;top:348.3px;width:0;height:0;border-top:2.5px solid transparent;border-bottom:2.5px solid transparent;border-right:3px solid #555a6a"></div>
<div class="a" style="left:156.2px;top:348.2px;width:346.7px;height:5.4px;background:#c2c3cb"></div>
<div class="a" style="left:799.5px;top:348.3px;width:0;height:0;border-top:2.5px solid transparent;border-bottom:2.5px solid transparent;border-left:3px solid #555a6a"></div>
<div class="t" style="letter-spacing:-0.309px;left:819px;top:345.8px;font-size:6.8px;color:#1e1e1e">行: 50</div>
<div class="t" style="letter-spacing:-0.512px;left:846px;top:345.8px;font-size:6.8px;color:#1e1e1e">字符: 1</div>
<div class="t" style="letter-spacing:-0.667px;left:876px;top:345.8px;font-size:6.8px;color:#1e1e1e">制表符</div>
<div class="t" style="letter-spacing:-0.763px;left:906.6px;top:345.8px;font-size:6.8px;color:#1e1e1e">CRLF</div>
</div>
<div id="tips" class="a" style="left:0;top:0">
<div class="a" style="left:367.5px;top:214px;width:210.5px;height:10.3px;background:linear-gradient(90deg,#e9ecf3 0 9.5px,#cdd3e1 9.5px);border:1px solid #b3b9c9"></div>
<svg class="a" style="left:370px;top:217.3px" width="4" height="4" viewBox="0 0 4 4"><path d="M3.6 .4 L3.6 3.6 L.4 3.6 Z" fill="#333"/></svg>
<svg class="a" style="left:376.0px;top:215.8px" width="7" height="7" viewBox="0 0 7 7"><ellipse cx="3.5" cy="3.7" rx="3" ry="2.5" fill="#1e4e9c"/><ellipse cx="2.6" cy="2.8" rx="1.2" ry=".8" fill="#9cc0f0"/></svg>
<div class="t" style="letter-spacing:-0.090px;left:388px;top:214.3px;font-size:6.55px;color:#626a7d">PassParameters.SceneTextures</div>
<div class="t" style="letter-spacing:-0.053px;left:493px;top:214.3px;font-size:6.55px;color:#727a8c">0x0000015c543c3bf8 {...}</div>
<svg class="a" style="left:569px;top:217px" width="6" height="5" viewBox="0 0 6 5"><path d="M.5 2.5 L3 2.5 M3 1 L3 4 L5.5 4 L5.5 1 Z" fill="none" stroke="#7a8090" stroke-width=".8"/></svg>
<div class="a" style="left:894px;top:225px;width:4.5px;height:9px;background:#e9ecf3;border:1px solid #c5c9d6;border-left:none"></div>
<div class="a" style="left:377px;top:224.4px;width:517.5px;height:10.3px;background:linear-gradient(90deg,#e9ecf3 0 9.6px,#cdd3e1 9.6px);border:1px solid #b3b9c9"></div>
<svg class="a" style="left:379.5px;top:227.6px" width="4" height="4" viewBox="0 0 4 4"><path d="M3.6 .4 L3.6 3.6 L.4 3.6 Z" fill="#333"/></svg>
<svg class="a" style="left:387px;top:226.1px" width="8" height="7" viewBox="0 0 8 7"><path d="M.5 2.5 L3 .5 L5 2.5 L3 4.5 Z" fill="#d9962a"/><path d="M4.6 3.6 L7.4 3.6 L7.4 6.4 L4.6 6.4 Z M3.2 3.6 L3.2 5.2 L4.6 5.2" fill="#e5a83c" stroke="#b77a18" stroke-width=".6"/></svg>
<div class="t" style="letter-spacing:0.069px;left:397.8px;top:224.6px;font-size:6.55px;color:#626a7d">FRDGUniformBuffer</div>
<div class="t" style="letter-spacing:0.064px;left:471.5px;top:224.6px;font-size:6.55px;color:#727a8c">{ParameterStruct={Contents=0x0000015c543c3b80 &lt;字符串中的字符无效。&gt; Layout=UE4Editor-Renderer.dll!0x00007ffb551765a8 {...} } ...}</div>
<div class="a" style="left:386.8px;top:234.6px;width:506.7px;height:10px;background:linear-gradient(90deg,#e9ecf3 0 9.6px,#cdd3e1 9.6px);border:1px solid #b3b9c9"></div>
<svg class="a" style="left:388.8px;top:237.8px" width="4" height="4" viewBox="0 0 4 4"><path d="M3.6 .4 L3.6 3.6 L.4 3.6 Z" fill="#333"/></svg>
<svg class="a" style="left:396px;top:236.3px" width="8" height="7" viewBox="0 0 8 7"><path d="M.5 2.5 L3 .5 L5 2.5 L3 4.5 Z" fill="#d9962a"/><path d="M4.6 3.6 L7.4 3.6 L7.4 6.4 L4.6 6.4 Z M3.2 3.6 L3.2 5.2 L4.6 5.2" fill="#e5a83c" stroke="#b77a18" stroke-width=".6"/></svg>
<div class="t" style="letter-spacing:-0.298px;left:408px;top:235px;font-size:6.55px;color:#626a7d">FRDGResource</div>
<div class="t" style="letter-spacing:-0.004px;left:475px;top:235px;font-size:6.55px;color:#727a8c">{Name=0x00007ffb54ef29a0 L"SceneTexturesStruct" ResourceRHI=0x0000000000000000 &lt;NULL&gt; DebugData={bIsActuallyUsedByPass=...} }</div>
<div class="a" style="left:869px;top:244.5px;width:28px;height:10px;background:#f3f4f8;border:1px solid #d4d7e0"></div>
<div class="t" style="letter-spacing:0.016px;left:872px;top:244.6px;font-size:6.55px;color:#b4b8c4">ize=...} }</div>
<div class="a" style="left:387px;top:244px;width:483px;height:39.5px;background:#fff;border:1px solid #b3b9c9;box-shadow:1px 1.5px 2.5px rgba(0,0,0,.28)"></div>
<div class="a" style="left:387.8px;top:245px;width:9px;height:37.5px;background:#e9ebf1"></div>
<div class="a" style="left:397px;top:254.3px;width:481px;height:9.4px;background:#cdd6f4"></div>
<div class="a" style="left:466.5px;top:245px;width:1px;height:37.5px;background:#d9dbe3"></div>
<svg class="a" style="left:389.8px;top:247.7px" width="3" height="4" viewBox="0 0 3 4"><path d="M.3 .3 L2.7 2 L.3 3.7 Z" fill="#555"/></svg>
<svg class="a" style="left:389.8px;top:256.8px" width="3" height="4" viewBox="0 0 3 4"><path d="M.3 .3 L2.7 2 L.3 3.7 Z" fill="#555"/></svg>
<svg class="a" style="left:389.8px;top:266.2px" width="3" height="4" viewBox="0 0 3 4"><path d="M.3 .3 L2.7 2 L.3 3.7 Z" fill="#555"/></svg>
<svg class="a" style="left:399.5px;top:248.2px" width="3" height="4" viewBox="0 0 3 4"><path d="M.3 .3 L2.7 2 L.3 3.7 Z" fill="#444"/></svg>
<svg class="a" style="left:406.5px;top:246.7px" width="7" height="7" viewBox="0 0 7 7"><ellipse cx="3.5" cy="3.7" rx="3" ry="2.5" fill="#1e4e9c"/><ellipse cx="2.6" cy="2.8" rx="1.2" ry=".8" fill="#9cc0f0"/></svg>
<div class="t" style="letter-spacing:-0.002px;left:417.4px;top:245.2px;font-size:6.55px;color:#1e1e1e">__vfptr</div>
<div class="t" style="letter-spacing:0.061px;left:485px;top:245.2px;font-size:6.55px;color:#1e1e1e">0x00007ffb54f34138 {UE4Editor-Renderer.dll!void(* TRDGUniformBuffer&lt;FSceneTextureUniformParameters&gt;::`vftable'[2])()} {...}</div>
<svg class="a" style="left:399.5px;top:257.3px" width="3" height="4" viewBox="0 0 3 4"><path d="M.3 .3 L2.7 2 L.3 3.7 Z" fill="#444"/></svg>
<svg class="a" style="left:406.5px;top:255.8px" width="7" height="7" viewBox="0 0 7 7"><rect x=".6" y=".6" width="5.8" height="5.8" fill="#eef3ff" stroke="#3b6db5" stroke-width=".9"/><rect x="2.4" y="2.4" width="2.2" height="2.2" fill="#3b6db5"/></svg>
<div class="t" style="letter-spacing:0.008px;left:417.4px;top:254.3px;font-size:6.55px;color:#1e1e1e">Name</div>
<div class="t" style="letter-spacing:-0.003px;left:485px;top:254.3px;font-size:6.55px;color:#1e1e1e">0x00007ffb54ef29a0 L"SceneTexturesStruct"</div>
<svg class="a" style="left:399.5px;top:266.7px" width="3" height="4" viewBox="0 0 3 4"><path d="M.3 .3 L2.7 2 L.3 3.7 Z" fill="#444"/></svg>
<svg class="a" style="left:406.5px;top:265.2px" width="7" height="7" viewBox="0 0 7 7"><ellipse cx="3.5" cy="3.7" rx="3" ry="2.5" fill="#1e4e9c"/><ellipse cx="2.6" cy="2.8" rx="1.2" ry=".8" fill="#9cc0f0"/></svg>
<div class="t" style="letter-spacing:-0.027px;left:417.4px;top:263.7px;font-size:6.55px;color:#1e1e1e">ResourceRHI</div>
<div class="t" style="letter-spacing:-0.136px;left:485px;top:263.7px;font-size:6.55px;color:#1e1e1e">0x0000000000000000 &lt;NULL&gt;</div>
<svg class="a" style="left:399.5px;top:276.0px" width="3" height="4" viewBox="0 0 3 4"><path d="M.3 .3 L2.7 2 L.3 3.7 Z" fill="#444"/></svg>
<svg class="a" style="left:406.5px;top:274.5px" width="7" height="7" viewBox="0 0 7 7"><path d="M1 6.4 L1 2.4 L3 .8 L3.4 3 Z" fill="#444"/><ellipse cx="4.6" cy="4.4" rx="1.9" ry="1.7" fill="#1e4e9c"/></svg>
<div class="t" style="letter-spacing:0.042px;left:417.4px;top:273.0px;font-size:6.55px;color:#1e1e1e">DebugData</div>
<div class="t" style="letter-spacing:0.049px;left:485px;top:273.0px;font-size:6.55px;color:#1e1e1e">{bIsActuallyUsedByPass=false bAllowRHIAccess=false bPassthrough=false }</div>
<svg class="a" style="left:459.5px;top:256.8px" width="6" height="5" viewBox="0 0 6 5"><path d="M.5 2.5 L3 2.5 M3 1 L3 4 L5.5 4 L5.5 1 Z" fill="none" stroke="#6a7080" stroke-width=".8"/></svg>
<svg class="a" style="left:469px;top:255.8px" width="7" height="7" viewBox="0 0 7 7"><circle cx="2.8" cy="2.8" r="1.9" fill="none" stroke="#555b70" stroke-width=".9"/><path d="M4.2 4.2 L6.4 6.4" stroke="#555b70" stroke-width="1.1"/></svg>
<div class="a" style="left:477.3px;top:258.3px;width:0;height:0;border-left:1.5px solid transparent;border-right:1.5px solid transparent;border-top:1.8px solid #444"></div>
<div class="a" style="left:871.5px;top:257px;width:5px;height:3.5px;border:1px solid #5d6b99;background:#e9eefc"></div>
</div>
<div id="right" class="a" style="left:0;top:0">
<div class="a" style="left:1064.5px;top:57px;width:15.8px;height:355.5px;background:#f3f4f9"></div>
<div class="a" style="left:1064.5px;top:57px;width:15.8px;height:13px;background:#40568d"></div>
<div class="t" style="left:1067px;top:58.5px;font-size:7px;color:#fff">诊...</div>
<div class="a" style="left:1064.5px;top:70px;width:6.2px;height:102.5px;background:#fbe4b4"></div>
<div class="a" style="left:1067.6px;top:75px;width:3.2px;height:6.6px;border-radius:3.3px 0 0 3.3px;background:#2f8fd8"></div>
<div class="a" style="left:1065px;top:172.5px;width:5.5px;height:17.5px;background:#ccd4ef"></div>
<div class="a" style="left:1065px;top:190px;width:5.5px;height:19px;background:#fff"></div>
<div class="a" style="left:1065px;top:209px;width:5.5px;height:69px;background:#eef0f8"></div>
<div class="a" style="left:1070.5px;top:70px;width:9.5px;height:208px;background:#e9eaef"></div>
<svg class="a" style="left:1071.5px;top:80px" width="8" height="6" viewBox="0 0 8 6"><path d="M1 5 L4 1.4 L7 5" fill="none" stroke="#70758a" stroke-width="1"/></svg>
<div class="a" style="left:1071.2px;top:90px;width:8.6px;height:110px;background:#c5c7cd"></div>
<svg class="a" style="left:1071.5px;top:259px" width="8" height="6" viewBox="0 0 8 6"><path d="M1 1 L4 4.6 L7 1" fill="none" stroke="#70758a" stroke-width="1"/></svg>
<svg class="a" style="left:1066.5px;top:242px" width="4" height="4" viewBox="0 0 4 4"><path d="M3.6 .4 L3.6 3.6 L.4 3.6 Z" fill="#333"/></svg>
<svg class="a" style="left:1066.5px;top:208px" width="4" height="4" viewBox="0 0 4 4"><path d="M3.6 .4 L3.6 3.6 L.4 3.6 Z" fill="#333"/></svg>
<div class="a" style="left:1065px;top:278px;width:15px;height:14px;background:#40568d"></div>
<div class="a" style="left:1067px;top:283px;width:0;height:0;border-top:2px solid transparent;border-bottom:2px solid transparent;border-right:2.6px solid #0e1630"></div>
<div class="a" style="left:1073px;top:283px;width:0;height:0;border-top:2px solid transparent;border-bottom:2px solid transparent;border-left:2.6px solid #0e1630"></div>
<div class="a" style="left:1065px;top:292px;width:15px;height:13px;background:#f0f1f6;overflow:hidden"><div class="t" style="left:3px;top:1.5px;font-size:7.5px;font-weight:bold;color:#111">事件</div></div>
<div class="a" style="left:1065px;top:305px;width:15px;height:16px;background:#fff"></div>
<div class="a" style="left:1073px;top:311.5px;width:5px;height:2px;background:#b9bcc8"></div>
<div class="a" style="left:1065px;top:321px;width:15px;height:12.5px;background:#f0f1f6;overflow:hidden"><div class="t" style="left:3px;top:1.5px;font-size:7.5px;font-weight:bold;color:#111">内存</div></div>
<div class="a" style="left:1065px;top:333.5px;width:15px;height:31.5px;background:#fff"></div>
<svg class="a" style="left:1072.5px;top:338px" width="7" height="6" viewBox="0 0 7 6"><rect x=".5" y="1.2" width="6" height="4.3" rx=".6" fill="#3a3d4a"/><rect x="2" y=".3" width="2.6" height="1.2" fill="#3a3d4a"/><circle cx="3.5" cy="3.4" r="1.1" fill="#fff"/></svg>
<div class="a" style="left:1072.5px;top:354px;width:6px;height:4px;border:1px solid #9a9eac;border-radius:1px;background:#e8e9ee"></div>
<div class="a" style="left:1065px;top:365px;width:15px;height:13px;background:#f0f1f6;overflow:hidden"><div class="t" style="left:3px;top:1.5px;font-size:7.5px;font-weight:bold;color:#111">CPU</div></div>
<div class="a" style="left:1065px;top:378px;width:15px;height:34.5px;background:#fff"></div>
<div class="a" style="left:1074px;top:384.5px;width:4.5px;height:4.5px;border-radius:50%;background:#2b2d38"></div>
<div class="a" style="left:1094.5px;top:57px;width:3.5px;height:66px;background:#4d5f95"></div>
<div class="a" style="left:1094.5px;top:127px;width:3.5px;height:32px;background:#4d5f95"></div>
<div class="t" style="letter-spacing:-0.111px;left:1093.8px;top:57px;font-size:6.9px;color:#fff;transform:rotate(90deg);transform-origin:left top">解决方案资源管理器</div>
<div class="t" style="letter-spacing:0.544px;left:1093.8px;top:127px;font-size:6.9px;color:#fff;transform:rotate(90deg);transform-origin:left top">Git 更改</div>
</div>
<div id="bl" class="a" style="left:0;top:0">
<div class="a" style="left:3.5px;top:417.4px;width:287px;height:148.1px;background:#fff"></div>
<div class="a" style="left:3.5px;top:417.4px;width:287px;height:13.6px;background:#40568d"></div>
<div class="t" style="letter-spacing:0.027px;left:6.5px;top:419.3px;font-size:7.0px;color:#fff;">查找符号结果 - 找到 2 个匹配项</div>
<div class="a" style="left:261.5px;top:424.0px;width:0;height:0;border-left:2px solid transparent;border-right:2px solid transparent;border-top:2.2px solid #c9d1ea"></div><svg class="a" style="left:270.0px;top:420.5px" width="6" height="8" viewBox="0 0 6 8"><path d="M1.6 .8 L4.4 .8 L4.4 4.4 L1.6 4.4 Z M.6 4.6 L5.4 4.6 M3 4.8 L3 7.6" fill="none" stroke="#c9d1ea" stroke-width=".8"/></svg><svg class="a" style="left:280.5px;top:421.0px" width="6" height="6" viewBox="0 0 6 6"><path d="M.6 .6 L5.4 5.4 M5.4 .6 L.6 5.4" stroke="#c9d1ea" stroke-width=".9"/></svg>
<div class="a" style="left:3.5px;top:431px;width:287px;height:13.7px;background:#ccd4ef"></div>
<svg class="a" style="left:8px;top:433px" width="9" height="9" viewBox="0 0 9 9"><path d="M1 1.5 L8 1.5 M1 3.5 L8 3.5" stroke="#b5271b" stroke-width="1.1"/><path d="M1 5.5 L8 5.5 M1 7.5 L8 7.5" stroke="#2a2f45" stroke-width="1.1"/><path d="M1 .8 L1 8.2" stroke="#2a2f45" stroke-width="1"/></svg>
<div class="a" style="left:20.5px;top:432.5px;width:1px;height:10px;background:#aab2d0"></div>
<svg class="a" style="left:26px;top:433px" width="9" height="9" viewBox="0 0 9 9"><path d="M1.2 3.4 L3 1.2 L4.8 3.4 M3 1.4 L3 7.6 L4.4 7.6" fill="none" stroke="#27408f" stroke-width="1.1"/><path d="M4.6 4.4 L8.4 4.4 L8.4 8 L4.6 8 Z" fill="#2a2f45"/></svg>
<svg class="a" style="left:38.5px;top:433px" width="9" height="9" viewBox="0 0 9 9"><path d="M1.2 3.4 L3 1.2 L4.8 3.4 M3 1.4 L3 7.6 L4.4 7.6" fill="none" stroke="#27408f" stroke-width="1.1"/><path d="M4.6 4.4 L8.4 4.4 L8.4 8 L4.6 8 Z" fill="#2a2f45"/></svg>
<div class="a" style="left:3.5px;top:444px;width:287px;height:112px;overflow:hidden">
<svg class="a" style="left:11px;top:2.8px" width="9" height="9" viewBox="0 0 9 9"><circle cx="3.4" cy="3.4" r="2.5" fill="none" stroke="#555" stroke-width=".8"/><circle cx="3.4" cy="3.4" r=".9" fill="#555"/><rect x="5.2" y="5.6" width="3" height="2.6" fill="#444"/></svg>
<svg class="a" style="left:11px;top:14.7px" width="9" height="9" viewBox="0 0 9 9"><circle cx="3.4" cy="3.4" r="2.5" fill="none" stroke="#555" stroke-width=".8"/><circle cx="3.4" cy="3.4" r=".9" fill="#555"/><rect x="5.2" y="5.6" width="3" height="2.6" fill="#444"/></svg>
<div class="t" style="letter-spacing:-0.074px;left:23.1px;top:1.8000000000000114px;font-size:7.2px;color:#1e1e1e">void FRDGSentinelPass::</div>
<div class="t" style="letter-spacing:-0.024px;left:102.9px;top:1.8000000000000114px;font-size:7.2px;color:#1e1e1e;background:#f8d699">ExecuteImpl</div>
<div class="t" style="letter-spacing:0.080px;left:142.2px;top:1.8000000000000114px;font-size:7.2px;color:#1e1e1e">(FRHIComputeCommandList &amp;) - C:\GitHub2\</div>
<div class="t" style="letter-spacing:0.064px;left:23.1px;top:13.699999999999989px;font-size:7.2px;color:#1e1e1e">void TRDGLambdaPass&lt;ParameterStructType, ExecuteLambdaType&gt;::</div>
<div class="t" style="letter-spacing:-0.024px;left:256.2px;top:13.699999999999989px;font-size:7.2px;color:#1e1e1e;background:#f8d699">ExecuteImpl</div>
</div>
<div class="a" style="left:3.5px;top:556.5px;width:287px;height:9px;background:#e9eaef"></div>
<div class="a" style="left:7.5px;top:558.5px;width:0;height:0;border-top:2.5px solid transparent;border-bottom:2.5px solid transparent;border-right:3px solid #555a6a"></div>
<div class="a" style="left:284px;top:558.5px;width:0;height:0;border-top:2.5px solid transparent;border-bottom:2.5px solid transparent;border-left:3px solid #555a6a"></div>
<div class="a" style="left:14px;top:558.3px;width:98px;height:5.4px;background:#c2c3cb"></div>
<div class="a" style="left:3.5px;top:565.5px;width:95.5px;height:11.5px;background:#40568d"></div>
<div class="t" style="letter-spacing:-0.125px;left:7.3px;top:566.5px;font-size:7.2px;color:#e6eaf6;">自动窗口</div>
<div class="a" style="left:37.5px;top:567.5px;width:1px;height:8px;background:#6d7fae"></div>
<div class="t" style="letter-spacing:-0.125px;left:41px;top:566.5px;font-size:7.2px;color:#e6eaf6;">局部变量</div>
<div class="a" style="left:71.5px;top:567.5px;width:1px;height:8px;background:#6d7fae"></div>
<div class="t" style="letter-spacing:0.000px;left:75.4px;top:566.5px;font-size:7.2px;color:#e6eaf6;">监视 1</div>
<div class="a" style="left:99px;top:565.5px;width:48px;height:11.5px;background:#fafafc"></div>
<div class="t" style="letter-spacing:-0.167px;left:102.5px;top:566.5px;font-size:7.2px;color:#1e1e1e;">查找符号结果</div>
</div>
<div id="br" class="a" style="left:0;top:0">
<div class="a" style="left:294.5px;top:417.4px;width:785.5px;height:148.1px;background:#f6f6f9"></div>
<div class="a" style="left:294.5px;top:417.4px;width:785.5px;height:13.6px;background:#40568d"></div>
<div class="t" style="letter-spacing:0.062px;left:297.5px;top:419.3px;font-size:7.3px;color:#fff;">查找"DeferredDecals"</div>
<div class="a" style="left:1051px;top:424.0px;width:0;height:0;border-left:2px solid transparent;border-right:2px solid transparent;border-top:2.2px solid #c9d1ea"></div><svg class="a" style="left:1059.5px;top:420.5px" width="6" height="8" viewBox="0 0 6 8"><path d="M1.6 .8 L4.4 .8 L4.4 4.4 L1.6 4.4 Z M.6 4.6 L5.4 4.6 M3 4.8 L3 7.6" fill="none" stroke="#c9d1ea" stroke-width=".8"/></svg><svg class="a" style="left:1070px;top:421.0px" width="6" height="6" viewBox="0 0 6 6"><path d="M.6 .6 L5.4 5.4 M5.4 .6 L.6 5.4" stroke="#c9d1ea" stroke-width=".9"/></svg>
<div class="a" style="left:294.5px;top:431px;width:785.5px;height:13.5px;background:#ccd4ef"></div>
<div class="a" style="left:298px;top:432px;width:87.5px;height:11.5px;background:#f7f8fd"></div>
<div class="t" style="letter-spacing:0.000px;left:301px;top:432.8px;font-size:7.3px;color:#1e1e1e;">所有文件</div>
<div class="a" style="left:378.7px;top:437px;width:0;height:0;border-left:2px solid transparent;border-right:2px solid transparent;border-top:2.2px solid #2a2f45"></div>
<div class="a" style="left:389.5px;top:432.5px;width:1px;height:10px;background:#aab2d0"></div>
<svg class="a" style="left:393px;top:433px" width="9" height="9" viewBox="0 0 9 9"><rect x="3" y=".8" width="5" height="5.6" fill="none" stroke="#3a4060" stroke-width=".9"/><rect x="1" y="2.8" width="5" height="5.6" fill="#ccd4ef" stroke="#3a4060" stroke-width=".9"/></svg>
<div class="a" style="left:404px;top:432.5px;width:1px;height:10px;background:#aab2d0"></div>
<svg class="a" style="left:410.5px;top:433px" width="9" height="9" viewBox="0 0 9 9"><path d="M1.2 3.4 L3 1.2 L4.8 3.4 M3 1.4 L3 7.6 L4.4 7.6" fill="none" stroke="#27408f" stroke-width="1.1"/><path d="M4.6 4.4 L8.4 4.4 L8.4 8 L4.6 8 Z" fill="#2a2f45"/></svg>
<svg class="a" style="left:423.5px;top:433px" width="9" height="9" viewBox="0 0 9 9"><path d="M1.2 3.4 L3 1.2 L4.8 3.4 M3 1.4 L3 7.6 L4.4 7.6" fill="none" stroke="#27408f" stroke-width="1.1"/><path d="M4.6 4.4 L8.4 4.4 L8.4 8 L4.6 8 Z" fill="#2a2f45"/></svg>
<div class="a" style="left:436.5px;top:432.5px;width:1px;height:10px;background:#aab2d0"></div>
<svg class="a" style="left:440px;top:433px" width="8" height="9" viewBox="0 0 8 9"><path d="M1 7.6 L3 1.4 L5 7.6 M1.8 5.4 L4.2 5.4 M6 3 L7.4 3 M6.7 2 L6.7 8" stroke="#b1b7cf" stroke-width=".9" fill="none"/></svg>
<div class="a" style="left:451.5px;top:432.5px;width:1px;height:10px;background:#aab2d0"></div>
<div class="t" style="letter-spacing:-0.266px;left:457.3px;top:432.8px;font-size:7.3px;color:#1e1e1e;">分组依据:</div>
<div class="a" style="left:489.5px;top:432px;width:101.5px;height:11.5px;background:#f7f8fd"></div>
<div class="t" style="letter-spacing:0.091px;left:492.5px;top:432.8px;font-size:7.3px;color:#1e1e1e;">路径, 然后是 文件</div>
<div class="a" style="left:584px;top:437px;width:0;height:0;border-left:2px solid transparent;border-right:2px solid transparent;border-top:2.2px solid #2a2f45"></div>
<div class="a" style="left:595.5px;top:432.5px;width:1px;height:10px;background:#aab2d0"></div>
<svg class="a" style="left:600px;top:434.5px" width="6" height="6" viewBox="0 0 6 6"><path d="M.8 .8 L5.2 5.2 M5.2 .8 L.8 5.2" stroke="#b1b7cf" stroke-width=".9"/></svg>
<svg class="a" style="left:610.5px;top:433px" width="9" height="9" viewBox="0 0 9 9"><path d="M7.4 4.6 A3 3 0 1 1 5.6 1.9" fill="none" stroke="#1d3c8a" stroke-width="1.4"/><path d="M4.6 .2 L7.8 1.6 L5.2 3.8 Z" fill="#1d3c8a"/></svg>
<div class="t" style="letter-spacing:-0.206px;left:622.3px;top:432.8px;font-size:7.3px;color:#1e1e1e;">重复查找(R)</div>
<div class="a" style="left:664.5px;top:432.5px;width:1px;height:10px;background:#aab2d0"></div>
<svg class="a" style="left:671px;top:433px" width="7" height="9" viewBox="0 0 7 9"><rect x=".8" y="3.8" width="5.4" height="4.6" fill="#2a2f45"/><path d="M2 3.8 L2 2.4 A1.5 1.5 0 0 1 5 2.4 L5 3.8" fill="none" stroke="#2a2f45" stroke-width=".9"/></svg>
<div class="t" style="letter-spacing:-0.176px;left:681.3px;top:432.8px;font-size:7.3px;color:#1e1e1e;">保留结果(K)</div>
<svg class="a" style="left:724.5px;top:433.5px" width="8" height="8" viewBox="0 0 8 8"><rect x=".5" y=".5" width="7" height="7" fill="none" stroke="#3a4060" stroke-width=".9"/><path d="M.5 2.8 L7.5 2.8 M.5 5.2 L7.5 5.2 M2.6 .5 L2.6 7.5" stroke="#3a4060" stroke-width=".8"/></svg>
<div class="t" style="letter-spacing:-0.232px;left:735.7px;top:432.8px;font-size:7.3px;color:#1e1e1e;">列表视图(L)</div>
<div class="a" style="left:966.5px;top:431.5px;width:113px;height:12.5px;background:#fafbfe"></div>
<div class="t" style="letter-spacing:-0.083px;left:968.7px;top:432.8px;font-size:7.2px;color:#8e93a6;">搜索查找结果</div>
<svg class="a" style="left:1064px;top:433.5px" width="8" height="8" viewBox="0 0 8 8"><circle cx="4.8" cy="3" r="2" fill="none" stroke="#2a2f45" stroke-width="1"/><path d="M3.4 4.4 L1 7" stroke="#2a2f45" stroke-width="1.2"/></svg>
<div class="a" style="left:1074.5px;top:437px;width:0;height:0;border-left:2px solid transparent;border-right:2px solid transparent;border-top:2.2px solid #555"></div>
<div class="t" style="letter-spacing:0.110px;left:298.5px;top:445.3px;font-size:7.3px;color:#1e1e1e;">全部查找"DeferredDecals"，包括杂项文件，整个解决方案，"!*\bin\*;!*\obj\*;!*\.*"</div>
<div class="a" style="left:294.5px;top:456.5px;width:776px;height:13px;background:#f6f6f9;border-bottom:1px solid #dcdee8"></div>
<div class="t" style="left:298.5px;top:458px;font-size:7.2px;color:#1e1e1e;">代码</div>
<div class="a" style="left:773.5px;top:457.5px;width:1px;height:11px;background:#dcdee8"></div>
<div class="t" style="left:777.3px;top:458px;font-size:7.2px;color:#1e1e1e;">文件</div>
<div class="a" style="left:796.5px;top:461.5px;width:0;height:0;border-left:2px solid transparent;border-right:2px solid transparent;border-bottom:2.5px solid #2a2f45"></div>
<div class="a" style="left:1024.5px;top:457.5px;width:1px;height:11px;background:#dcdee8"></div>
<div class="t" style="left:1029px;top:458px;font-size:7.2px;color:#1e1e1e;">行</div>
<div class="a" style="left:1044px;top:457.5px;width:1px;height:11px;background:#dcdee8"></div>
<div class="t" style="left:1048.6px;top:458px;font-size:7.2px;color:#1e1e1e;">列</div>
<div class="a" style="left:1066px;top:457.5px;width:1px;height:11px;background:#dcdee8"></div>
<div class="a" style="left:294.5px;top:469.7px;width:776px;height:87px;overflow:hidden;background:#fff">
<div class="a" style="left:0;top:68.30000000000001px;width:776px;height:11.5px;background:#e9ebf1"></div>
<svg class="a" style="left:29.0px;top:0.30000000000001137px" width="4" height="4" viewBox="0 0 4 4"><path d="M3.6 .4 L3.6 3.6 L.4 3.6 Z" fill="#333"/></svg>
<div class="t" style="letter-spacing:-0.086px;left:36.5px;top:-3.099999999999966px;font-size:7.3px;font-weight:bold;color:#1e1e1e">CompositionLighting.cpp (1)</div>
<div class="t" style="letter-spacing:0.098px;left:47.0px;top:8.900000000000034px;font-size:7.3px;color:#1e1e1e">#include "CompositionLighting/PostProcess<span style="background:#f5ad33">DeferredDecals</span>.h"</div>
<div class="t" style="letter-spacing:0.134px;left:482.79999999999995px;top:8.900000000000034px;font-size:7.3px;color:#1e1e1e">CompositionLighting.cpp</div>
<div class="t" style="left:734.5px;top:8.900000000000034px;font-size:7.3px;color:#1e1e1e">14</div>
<div class="t" style="left:754.0999999999999px;top:8.900000000000034px;font-size:7.3px;color:#1e1e1e">42</div>
<svg class="a" style="left:29.0px;top:24.30000000000001px" width="4" height="4" viewBox="0 0 4 4"><path d="M3.6 .4 L3.6 3.6 L.4 3.6 Z" fill="#333"/></svg>
<div class="t" style="letter-spacing:-0.052px;left:36.5px;top:20.80000000000001px;font-size:7.3px;font-weight:bold;color:#1e1e1e">CompositionLighting.h (1)</div>
<div class="t" style="letter-spacing:0.062px;left:47.0px;top:33.10000000000002px;font-size:7.3px;color:#1e1e1e">#include "PostProcess<span style="background:#f5ad33">DeferredDecals</span>.h"</div>
<div class="t" style="letter-spacing:0.109px;left:482.79999999999995px;top:33.10000000000002px;font-size:7.3px;color:#1e1e1e">CompositionLighting.h</div>
<div class="t" style="left:734.5px;top:33.10000000000002px;font-size:7.3px;color:#1e1e1e">11</div>
<div class="t" style="left:754.0999999999999px;top:33.10000000000002px;font-size:7.3px;color:#1e1e1e">22</div>
<svg class="a" style="left:29.0px;top:48.599999999999966px" width="4" height="4" viewBox="0 0 4 4"><path d="M3.6 .4 L3.6 3.6 L.4 3.6 Z" fill="#333"/></svg>
<div class="t" style="letter-spacing:-0.052px;left:36.5px;top:45.099999999999966px;font-size:7.3px;font-weight:bold;color:#1e1e1e">PostProcessDeferredDecals.cpp (2)</div>
<div class="t" style="letter-spacing:0.098px;left:47.0px;top:57.00000000000006px;font-size:7.3px;color:#1e1e1e">#include "CompositionLighting/PostProcess<span style="background:#f5ad33">DeferredDecals</span>.h"</div>
<div class="t" style="letter-spacing:0.019px;left:482.79999999999995px;top:57.00000000000006px;font-size:7.3px;color:#1e1e1e">PostProcessDeferredDecals.cpp</div>
<div class="t" style="left:734.5px;top:57.00000000000006px;font-size:7.3px;color:#1e1e1e">3</div>
<div class="t" style="left:754.0999999999999px;top:57.00000000000006px;font-size:7.3px;color:#1e1e1e">42</div>
<div class="t" style="letter-spacing:-0.086px;left:47.0px;top:69.00000000000006px;font-size:7.3px;color:#1e1e1e">RDG_EVENT_SCOPE(GraphBuilder, "<span style="background:#f5ad33">DeferredDecals</span> %s", GetStageName(DecalRenderStage));</div>
<div class="t" style="letter-spacing:0.019px;left:482.79999999999995px;top:69.00000000000006px;font-size:7.3px;color:#1e1e1e">PostProcessDeferredDecals.cpp</div>
<div class="t" style="left:734.5px;top:69.00000000000006px;font-size:7.3px;color:#1e1e1e">541</div>
<div class="t" style="left:754.0999999999999px;top:69.00000000000006px;font-size:7.3px;color:#1e1e1e">34</div>
<svg class="a" style="left:29.0px;top:85.09999999999997px" width="4" height="4" viewBox="0 0 4 4"><path d="M3.6 .4 L3.6 3.6 L.4 3.6 Z" fill="#333"/></svg>
<div class="t" style="letter-spacing:-0.081px;left:36.5px;top:81.59999999999997px;font-size:7.3px;font-weight:bold;color:#1e1e1e">PostProcessMeshDecals.cpp (1)</div>
</div>
<div class="t" style="letter-spacing:0.001px;left:298.5px;top:555.8px;font-size:7.2px;color:#1e1e1e;">匹配行: 13 匹配文件: 8 搜索的文件总数: 35847</div>
<div class="a" style="left:1070.5px;top:456.5px;width:9.5px;height:100px;background:#e9eaef"></div>
<div class="a" style="left:1072.5px;top:460.5px;width:0;height:0;border-left:2.5px solid transparent;border-right:2.5px solid transparent;border-bottom:3px solid #70758a"></div>
<div class="a" style="left:1072.5px;top:549px;width:0;height:0;border-left:2.5px solid transparent;border-right:2.5px solid transparent;border-top:3px solid #70758a"></div>
<div class="a" style="left:1072.5px;top:499px;width:5.5px;height:22px;background:#c2c3cb"></div>
<div class="a" style="left:294.5px;top:565.5px;width:357px;height:11.5px;background:#40568d"></div>
<div class="t" style="letter-spacing:0.032px;left:298px;top:566.6px;font-size:7.4px;color:#e6eaf6;">"MeshDrawCommands"引用</div>
<div class="a" style="left:395.5px;top:565.5px;width:75.5px;height:11.5px;background:#fafafc"></div>
<div class="t" style="letter-spacing:-0.089px;left:398.5px;top:566.6px;font-size:7.4px;color:#1e1e1e;">查找"DeferredDecals"</div>
<div class="t" style="letter-spacing:-0.200px;left:475.6px;top:566.6px;font-size:7.2px;color:#e6eaf6;">调用堆栈</div>
<div class="t" style="letter-spacing:0.000px;left:510px;top:566.6px;font-size:7.2px;color:#e6eaf6;">断点</div>
<div class="t" style="letter-spacing:-0.250px;left:531px;top:566.6px;font-size:7.2px;color:#e6eaf6;">异常设置</div>
<div class="t" style="letter-spacing:-0.125px;left:565px;top:566.6px;font-size:7.2px;color:#e6eaf6;">命令窗口</div>
<div class="t" style="letter-spacing:0.000px;left:599px;top:566.6px;font-size:7.2px;color:#e6eaf6;">即时窗口</div>
<div class="t" style="letter-spacing:0.000px;left:633.5px;top:566.6px;font-size:7.2px;color:#e6eaf6;">输出</div>
<div class="a" style="left:506.5px;top:567.5px;width:1px;height:8px;background:#6d7fae"></div>
<div class="a" style="left:527.5px;top:567.5px;width:1px;height:8px;background:#6d7fae"></div>
<div class="a" style="left:561.5px;top:567.5px;width:1px;height:8px;background:#6d7fae"></div>
<div class="a" style="left:595.5px;top:567.5px;width:1px;height:8px;background:#6d7fae"></div>
<div class="a" style="left:630px;top:567.5px;width:1px;height:8px;background:#6d7fae"></div>
</div>
<div id="status" class="a" style="left:0;top:581.5px;width:1098px;height:14.5px;background:#a84a3b">
<svg class="a" style="left:3px;top:3.5px" width="10" height="8" viewBox="0 0 10 8"><path d="M2.2 1 L9 1 L7.8 7 L1 7 Z" fill="none" stroke="#fff" stroke-width="1"/></svg>
<div class="t" style="left:16.5px;top:2.5px;font-size:7.2px;color:#fff">就绪</div>
<svg class="a" style="left:870px;top:3.5px" width="7" height="8" viewBox="0 0 7 8"><path d="M3.5 7.4 L3.5 1.4 M1 3.6 L3.5 1 L6 3.6" fill="none" stroke="#fff" stroke-width="1.2"/></svg>
<div class="t" style="left:880.5px;top:2.3px;font-size:8px;color:#fff">0</div>
<div class="a" style="left:888.5px;top:6.5px;width:0;height:0;border-left:2px solid transparent;border-right:2px solid transparent;border-bottom:2.4px solid #fff"></div>
<svg class="a" style="left:907px;top:3.5px" width="8" height="8" viewBox="0 0 8 8"><path d="M1 7 L1.6 4.8 L5.6 .8 L7.2 2.4 L3.2 6.4 Z" fill="#fff"/></svg>
<div class="t" style="left:918px;top:2.3px;font-size:8px;color:#fff">7</div>
<svg class="a" style="left:934.5px;top:3px" width="9" height="9" viewBox="0 0 9 9"><path d="M4.5 .6 L8.4 4.5 L4.5 8.4 L.6 4.5 Z" fill="#fff"/><path d="M3.4 3 L5.6 5 M4.5 4 L4.5 6.2" stroke="#a84a3b" stroke-width=".8"/></svg>
<div class="t" style="letter-spacing:-0.336px;left:947px;top:2.3px;font-size:8px;color:#fff">UnrealEngine-4.26</div>
<div class="a" style="left:1011.5px;top:6.5px;width:0;height:0;border-left:2px solid transparent;border-right:2px solid transparent;border-bottom:2.4px solid #fff"></div>
<svg class="a" style="left:1029px;top:3px" width="8" height="9" viewBox="0 0 8 9"><path d="M1.4 1 L4 4.4 L6.6 1 M4 4.4 L4 8.4" fill="none" stroke="#fff" stroke-width="1.1"/></svg>
<div class="t" style="letter-spacing:0.039px;left:1041px;top:2.3px;font-size:8px;color:#fff">main</div>
<div class="a" style="left:1062px;top:6.5px;width:0;height:0;border-left:2px solid transparent;border-right:2px solid transparent;border-bottom:2.4px solid #fff"></div>
<svg class="a" style="left:1081px;top:3px" width="8" height="9" viewBox="0 0 8 9"><path d="M4 .8 C6 .8 6.4 3 6.4 4.6 L7.4 6.4 L.6 6.4 L1.6 4.6 C1.6 3 2 .8 4 .8 Z" fill="#fff"/><circle cx="4" cy="7.4" r="1" fill="#fff"/></svg>
</div>
</body>
</html>
